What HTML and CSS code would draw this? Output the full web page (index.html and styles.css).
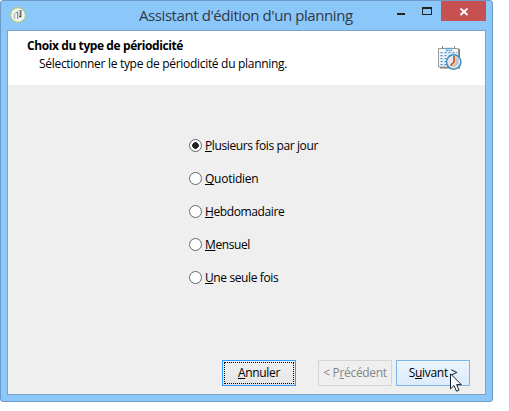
FILE: index.html
```
<!DOCTYPE html>
<html lang="fr">
<head>
<meta charset="utf-8">
<title>Assistant d'édition d'un planning</title>
<link rel="stylesheet" href="styles.css">
</head>
<body>
<div class="window">
  <header class="titlebar">
    <svg class="app-icon" width="16" height="16" viewBox="0 0 16 16">
      <circle cx="8" cy="8" r="7.400" fill="#f4f7f4" stroke="#a9cc78" stroke-width="1.100"/>
      <path d="M3.500 6.500l2-1v7l-2-1z" fill="#c2c8c8"/>
      <path d="M5 5.500l2.500-1 .8.800v6.700H7V6.500" fill="#8b9393"/>
      <path d="M9.200 3v6" stroke="#b4baba" stroke-width="1"/>
      <path d="M10.800 3v7.500M9 9.500h1.500" fill="none" stroke="#465050" stroke-width="1.200"/>
    </svg>
    <h1 class="title">Assistant d'édition d'un planning</h1>
    <div class="controls">
      <svg class="win-btn" width="29" height="20"><path d="M12 12h8v2h-8z" fill="#222"/></svg>
      <svg class="win-btn" width="27" height="20" shape-rendering="crispEdges"><path d="M8 6h10v8H8zM9 8v5h8V8z" fill="#222" fill-rule="evenodd"/></svg>
      <svg class="close-btn" width="45" height="20"><path d="M19.500 7.500l7 6.500M26.500 7.500l-7 6.500" stroke="#fff" stroke-width="1.800"/></svg>
    </div>
  </header>
  <main class="client">
    <section class="banner">
      <div>
        <h2 class="heading">Choix du type de périodicité</h2>
        <p class="subtitle">Sélectionner le type de périodicité du planning.</p>
      </div>
      <svg class="calendar" width="24" height="25" viewBox="0 0 24 25">
        <path d="M2 3h20v19.500H2z" fill="#777"/>
        <path d="M.5 2.500h20v18.500H.5z" fill="#f7f8fa" stroke="#999"/>
        <path d="M4.500 0v3M16.500 0v3" stroke="#888"/>
        <path d="M7 2.500h8M8 4.500h6" stroke="#52a5cf" stroke-width="1.300" stroke-dasharray="2 .5"/>
        <path d="M2 7.500h17M2 10.500h15M2 13.500h12M2 16.500h10M2 19h10" stroke="#d5e1f4" stroke-width="1.500"/>
        <path d="M2.500 6.500h17M2.500 9.500h14M2.500 12.500h8M2.500 15.500h7M2.500 18.500h7" stroke="#4a93cf" stroke-dasharray="2 2"/>
        <circle cx="15.700" cy="16" r="7.200" fill="#e8e6e6" stroke="#398fc1" stroke-width="1.500"/>
        <path d="M17 11c4 1 5 5 2 8s-5 2-7 1c5 0 7-4 5-9z" fill="#c5c2c5"/>
        <path d="M16 10v6l-3.500 3.500" fill="none" stroke="#c95520" stroke-width="1.700"/>
      </svg>
    </section>
    <section class="options">
      <label class="option"><span class="radio checked"></span><span><u>P</u>lusieurs fois par jour</span></label>
      <label class="option"><span class="radio"></span><span class="quotidien"><u>Q</u>uotidien</span></label>
      <label class="option"><span class="radio"></span><span><u>H</u>ebdomadaire</span></label>
      <label class="option"><span class="radio"></span><span><u>M</u>ensuel</span></label>
      <label class="option"><span class="radio"></span><span><u>U</u>ne seule fois</span></label>
    </section>
    <footer class="buttons">
      <button class="btn cancel"><span><u>A</u>nnuler</span></button>
      <button class="btn previous" disabled><span>&lt; P<u>r</u>écédent</span></button>
      <button class="btn next"><span>S<u>u</u>ivant &gt;</span></button>
    </footer>
  </main>
  <svg class="cursor" width="12" height="19" viewBox="0 0 12 19"><path d="M.5 .8v15l3.500-3.300 2.500 5.700 2.500-1.100-2.400-5.500h4.700z" fill="#fff" stroke="#171c2b"/></svg>
</div>
</body>
</html>
```
FILE: styles.css
```
* { box-sizing: border-box; }
body {
  margin: 0;
  background: #fff;
  font: 12px/16px "Open Sans", "Noto Sans", sans-serif;
  color: #000;
}
h1, h2, p { margin: 0; }
u { text-decoration: underline; text-underline-offset: 1px; text-decoration-thickness: 1px; text-decoration-skip-ink: none; }
.window {
  position: relative;
  width: 493px;
  height: 402px;
  padding: 0 6px 6px;
  border: 1px solid #6c9bc9;
  border-radius: 3px;
  background: #8cc7fa;
}
.titlebar {
  display: flex;
  height: 29px;
  padding-left: 3px;
}
.app-icon { margin-top: 6px; }
.title {
  width: 216px;
  margin: 3px 0 0 113px;
  font-size: 15px;
  line-height: 22px;
  font-weight: 400;
  letter-spacing: -0.42px;
  color: #303a45;
  white-space: nowrap;
}
.controls { display: flex; margin-left: auto; }
.win-btn { display: block; }
.close-btn { display: block; background: #c75050; }
.client {
  display: flex;
  flex-direction: column;
  width: 479px;
  height: 365px;
  border: 1px solid #7ba3c9;
  background: #efefef;
}
.banner {
  display: flex;
  justify-content: space-between;
  height: 54px;
  padding: 6px 23px 0 19px;
  background: #fff;
}
.heading { font-size: 12px; line-height: 18px; letter-spacing: -0.41px; }
.subtitle { padding-left: 12px; line-height: 18px; letter-spacing: -0.3px; white-space: nowrap; }
.calendar { margin-top: 9px; }
.options { padding: 44px 0 0 181px; letter-spacing: -0.39px; }
.quotidien { letter-spacing: -0.25px; }
.option { display: flex; align-items: center; height: 33px; gap: 3px; white-space: nowrap; }
.radio {
  width: 13px;
  height: 13px;
  border: 1px solid #666;
  border-radius: 50%;
  background: #fff;
}
.checked { background: radial-gradient(circle, #222 0 3px, #fff 3.600px); }
.buttons { display: flex; margin-top: auto; padding: 0 14px 8px 214px; }
.btn {
  width: 74px;
  height: 26px;
  padding: 0;
  border: 1px solid #3399ff;
  background: linear-gradient(#f1f1f1, #e4e4e4);
  font: inherit;
  letter-spacing: -0.32px;
  color: #000;
  white-space: nowrap;
}
.cancel { outline: 1px dotted #000; outline-offset: -3px; }
.previous { margin-left: 22px; border-color: #d5d5d5; background: #efefef; color: #858585; }
.next { margin-left: 4px; border-color: #7eb4ea; background: linear-gradient(#ebf4fc, #dcecfc); }
.cursor { position: absolute; left: 449px; top: 372px; }
```
